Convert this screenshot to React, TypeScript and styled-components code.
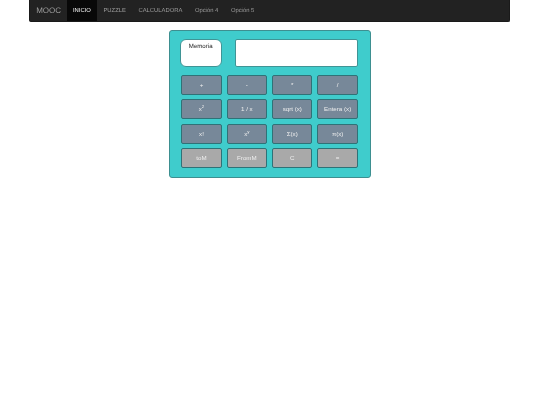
import React from "react";
import styled, { createGlobalStyle } from "styled-components";

const Global = createGlobalStyle`
  html, body { margin: 0; padding: 0; background: #fff; }
  body { font-family: "Liberation Sans", Arial, sans-serif; text-rendering: geometricPrecision; }
`;

const Page = styled.div`
  width: 540px;
  height: 405px;
  overflow: hidden;
  display: flex;
  flex-direction: column;
  align-items: center;
  will-change: transform;
`;

const Navbar = styled.nav`
  width: 481px;
  height: 22px;
  flex: none;
  margin-right: 0.6px;
  background: #222;
  border: 1px solid #1a1a1a;
  border-top: 0;
  border-radius: 0 0 2px 2px;
  box-sizing: border-box;
  display: flex;
  align-items: stretch;
`;

const Brand = styled.a`
  width: 36.5px;
  padding-left: 6px;
  box-sizing: border-box;
  color: #9d9d9d;
  font-size: 8px;
  line-height: 21.5px;
`;

const NavItem = styled.a<{ $active?: boolean }>`
  padding: 0 6.3px;
  font-size: 5.85px;
  line-height: 23px;
  color: ${(p) => (p.$active ? "#fff" : "#9d9d9d")};
  background: ${(p) => (p.$active ? "#080808" : "transparent")};
`;

const Calculator = styled.div`
  width: 202px;
  height: 148px;
  margin-top: 8px;
  box-sizing: border-box;
  padding: 8px 12.3px 0 9.7px;
  background: #3fcccc;
  border: 1px solid #3d8f90;
  border-radius: 3px;
  display: flex;
  flex-direction: column;
`;

const TopRow = styled.div`
  display: flex;
  justify-content: space-between;
  height: 27.5px;
`;

const Memory = styled.div`
  width: 42px;
  height: 27.5px;
  box-sizing: border-box;
  background: #fff;
  border: 1px solid #3f9495;
  border-radius: 6px;
  color: #222;
  font-size: 6.1px;
  text-align: center;
  padding-top: 3px;
  line-height: 8px;
`;

const Display = styled.div`
  width: 122.7px;
  height: 27.5px;
  box-sizing: border-box;
  background: #fff;
  border: 1px solid #3f9495;
  border-radius: 2px;
`;

const Keys = styled.div`
  margin: 8.5px 0 0 1.6px;
  display: grid;
  grid-template-columns: repeat(4, 40.4px);
  grid-auto-rows: 20px;
  column-gap: 5px;
  row-gap: 4.4px;
`;

const Key = styled.button<{ $light?: boolean }>`
  padding: 0;
  margin: 0;
  box-sizing: border-box;
  background: ${(p) => (p.$light ? "#a9a9a9" : "#778899")};
  border: 1px solid #2f7277;
  border-radius: 2px;
  color: #eee;
  font-family: inherit;
  font-size: 6.2px;
  line-height: 1;
`;

const Sup = styled.sup`
  font-size: 4.4px;
  line-height: 0;
`;

const rows: { label: React.ReactNode; light?: boolean }[] = [
  { label: "+" },
  { label: "-" },
  { label: "*" },
  { label: "/" },
  { label: <>x<Sup>2</Sup></> },
  { label: "1 / x" },
  { label: "sqrt (x)" },
  { label: "Entera (x)" },
  { label: "x!" },
  { label: <>x<Sup>y</Sup></> },
  { label: "Σ(x)" },
  { label: "π(x)" },
  { label: "toM", light: true },
  { label: "FromM", light: true },
  { label: "C", light: true },
  { label: "=", light: true },
];

export default function App() {
  return (
    <Page>
      <Global />
      <Navbar>
        <Brand>MOOC</Brand>
        <NavItem $active>INICIO</NavItem>
        <NavItem>PUZZLE</NavItem>
        <NavItem>CALCULADORA</NavItem>
        <NavItem>Opción 4</NavItem>
        <NavItem>Opción 5</NavItem>
      </Navbar>
      <Calculator>
        <TopRow>
          <Memory>Memoria</Memory>
          <Display />
        </TopRow>
        <Keys>
          {rows.map((k, i) => (
            <Key key={i} $light={k.light}>{k.label}</Key>
          ))}
        </Keys>
      </Calculator>
    </Page>
  );
}
